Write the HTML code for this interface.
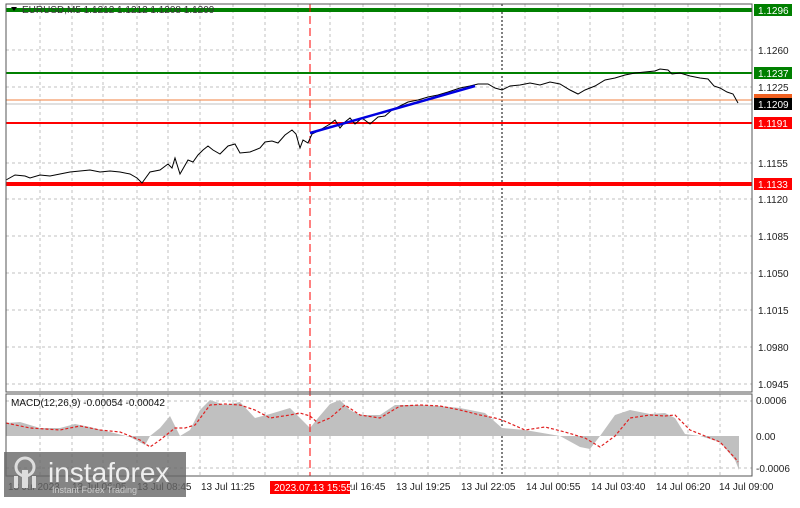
<!DOCTYPE html>
<html><head><style>
body{margin:0;background:#fff;width:800px;height:503px;overflow:hidden;font-family:"Liberation Sans",sans-serif}
svg text{font-family:"Liberation Sans",sans-serif;font-size:10px}
</style></head><body>
<svg width="800" height="503" viewBox="0 0 800 503" xmlns="http://www.w3.org/2000/svg">
<rect width="800" height="503" fill="#fff"/>
<g stroke="#c0c0c0" stroke-dasharray="3,3" stroke-width="1">
<line x1="6" y1="50" x2="752" y2="50"/><line x1="6" y1="87" x2="752" y2="87"/>
<line x1="6" y1="163" x2="752" y2="163"/><line x1="6" y1="199" x2="752" y2="199"/>
<line x1="6" y1="236" x2="752" y2="236"/><line x1="6" y1="273" x2="752" y2="273"/>
<line x1="6" y1="310" x2="752" y2="310"/><line x1="6" y1="347" x2="752" y2="347"/>
<line x1="6" y1="384" x2="752" y2="384"/>
<line x1="6" y1="401" x2="752" y2="401"/><line x1="6" y1="468" x2="752" y2="468"/>
<line x1="40" y1="4" x2="40" y2="476"/><line x1="72" y1="4" x2="72" y2="476"/><line x1="103" y1="4" x2="103" y2="476"/><line x1="137" y1="4" x2="137" y2="476"/><line x1="168" y1="4" x2="168" y2="476"/><line x1="200" y1="4" x2="200" y2="476"/><line x1="233" y1="4" x2="233" y2="476"/><line x1="265" y1="4" x2="265" y2="476"/><line x1="298" y1="4" x2="298" y2="476"/><line x1="330" y1="4" x2="330" y2="476"/><line x1="363" y1="4" x2="363" y2="476"/><line x1="395" y1="4" x2="395" y2="476"/><line x1="428" y1="4" x2="428" y2="476"/><line x1="460" y1="4" x2="460" y2="476"/><line x1="493" y1="4" x2="493" y2="476"/><line x1="525" y1="4" x2="525" y2="476"/><line x1="558" y1="4" x2="558" y2="476"/><line x1="590" y1="4" x2="590" y2="476"/><line x1="623" y1="4" x2="623" y2="476"/><line x1="655" y1="4" x2="655" y2="476"/><line x1="688" y1="4" x2="688" y2="476"/><line x1="720" y1="4" x2="720" y2="476"/>
</g>
<line x1="502" y1="4" x2="502" y2="476" stroke="#000" stroke-dasharray="2,2"/>
<polygon fill="#c0c0c0" points="6,436 6,423 20,422 40,428 60,428 75,424 90,427 110,432 130,437 145,445 150,436 160,428 170,416 175,426 180,436 190,430 200,410 210,400 225,405 240,402 255,418 270,414 290,408 300,418 310,428 318,418 330,404 340,400 350,410 360,415 380,415 395,405 420,405 440,406 460,408 485,413 502,428 525,430 560,436 580,447 590,449 600,436 615,415 630,410 650,414 665,413 675,418 685,434 700,436 720,442 735,460 739,470 739,436"/>
<polyline fill="none" stroke="#e02020" stroke-dasharray="3,2" stroke-width="1.2" points="6,423 30,428 60,430 80,426 100,430 120,432 140,440 150,447 160,440 175,428 185,428 195,425 210,405 225,404 240,405 255,410 270,418 290,415 300,413 310,416 318,423 330,418 345,405 360,415 380,418 400,406 420,405 440,406 460,410 480,415 495,418 502,420 525,430 545,427 565,432 585,438 600,447 615,436 630,418 650,415 665,416 675,415 690,430 705,436 720,442 735,458 738,462"/>
<line x1="6" y1="10" x2="752" y2="10" stroke="#008000" stroke-width="4"/>
<line x1="6" y1="73" x2="752" y2="73" stroke="#008000" stroke-width="2"/>
<line x1="6" y1="100" x2="752" y2="100" stroke="#f08040" stroke-width="1"/>
<line x1="6" y1="104" x2="752" y2="104" stroke="#c0c0c0" stroke-width="1"/>
<line x1="6" y1="123" x2="752" y2="123" stroke="#ff0000" stroke-width="2"/>
<line x1="6" y1="184" x2="752" y2="184" stroke="#ff0000" stroke-width="4"/>
<line x1="310" y1="4" x2="310" y2="476" stroke="#ff0000" stroke-dasharray="8,4"/>
<polyline fill="none" stroke="#000" stroke-width="1" points="6,180 15,175 25,176 30,178 40,175 50,176 60,174 70,172 80,171 90,170 100,172 110,171 120,172 130,174 137,178 142,183 150,172 160,170 168,164 172,168 175,158 180,174 188,160 193,162 198,155 203,150 208,146 213,150 220,154 228,146 235,144 240,153 250,152 260,148 265,142 272,141 278,143 285,135 292,130 296,134 300,148 303,140 308,143 312,134 320,130 330,124 335,120 340,128 345,122 350,118 355,124 362,118 370,124 378,117 385,116 392,110 400,106 408,102 418,100 428,97 438,95 448,92 460,88 470,86 478,84 488,84 495,88 502,90 510,86 520,85 530,83 540,85 550,82 560,84 570,90 578,94 585,90 595,86 605,80 615,78 625,75 635,73 645,72 655,71 660,69 668,70 672,74 680,73 690,76 700,78 708,79 714,86 720,88 727,92 733,94 738,103"/>
<line x1="310" y1="133" x2="475" y2="86" stroke="#0000e0" stroke-width="2.5"/>
<rect x="6" y="4" width="746" height="388" fill="none" stroke="#555"/>
<rect x="6" y="394" width="746" height="82" fill="none" stroke="#555"/>
<path d="M11 7 L17 7 L14 11 Z" fill="#000"/>
<text x="22" y="13" fill="#333" font-size="9">EURUSD,M5  1.1212 1.1212 1.1208 1.1209</text>
<text x="11" y="406" fill="#111">MACD(12,26,9) -0.00054 -0.00042</text>
<g fill="#222">
<text x="758" y="54">1.1260</text><text x="758" y="91">1.1225</text><text x="758" y="167">1.1155</text><text x="758" y="203">1.1120</text><text x="758" y="240">1.1085</text><text x="758" y="277">1.1050</text><text x="758" y="314">1.1015</text><text x="758" y="351">1.0980</text><text x="758" y="388">1.0945</text>
<text x="756" y="404">0.0006</text><text x="756" y="440">0.00</text><text x="756" y="472">-0.0006</text>
</g>
<rect x="754" y="4" width="38" height="12" fill="#008000"/><text x="758" y="14" fill="#fff">1.1296</text>
<rect x="754" y="67" width="38" height="12" fill="#008000"/><text x="758" y="77" fill="#fff">1.1237</text>
<rect x="754" y="94" width="38" height="6" fill="#f06020"/>
<rect x="754" y="98" width="38" height="12" fill="#000"/><text x="758" y="108" fill="#fff">1.1209</text>
<rect x="754" y="117" width="38" height="12" fill="#ff0000"/><text x="758" y="127" fill="#fff">1.1191</text>
<rect x="754" y="178" width="38" height="12" fill="#ff0000"/><text x="758" y="188" fill="#fff">1.1133</text>
<g fill="#222">
<text x="8" y="490">13 Jul 2023</text><text x="72" y="490">13 Jul 06:05</text><text x="137" y="490">13 Jul 08:45</text>
<text x="201" y="490">13 Jul 11:25</text><text x="331" y="490">13 Jul 16:45</text><text x="396" y="490">13 Jul 19:25</text><text x="461" y="490">13 Jul 22:05</text><text x="526" y="490">14 Jul 00:55</text><text x="591" y="490">14 Jul 03:40</text><text x="656" y="490">14 Jul 06:20</text><text x="719" y="490">14 Jul 09:00</text>
</g>
<rect x="270" y="481" width="80" height="13" fill="#ff0000"/><text x="274" y="491" fill="#fff">2023.07.13 15:55</text>
<rect x="4" y="452" width="182" height="45" fill="#666" fill-opacity="0.8"/>
<g fill="#ddd"><circle cx="25" cy="467" r="9" fill="none" stroke="#ddd" stroke-width="3"/><rect x="22" y="470" width="6" height="18"/><rect x="14" y="476" width="4" height="12"/><rect x="32" y="476" width="4" height="12"/></g>
<text x="48" y="482" fill="#eee" style="font-size:28px">instaforex</text>
<text x="52" y="493" fill="#ccc" style="font-size:9px">Instant Forex Trading</text>
</svg>
</body></html>
